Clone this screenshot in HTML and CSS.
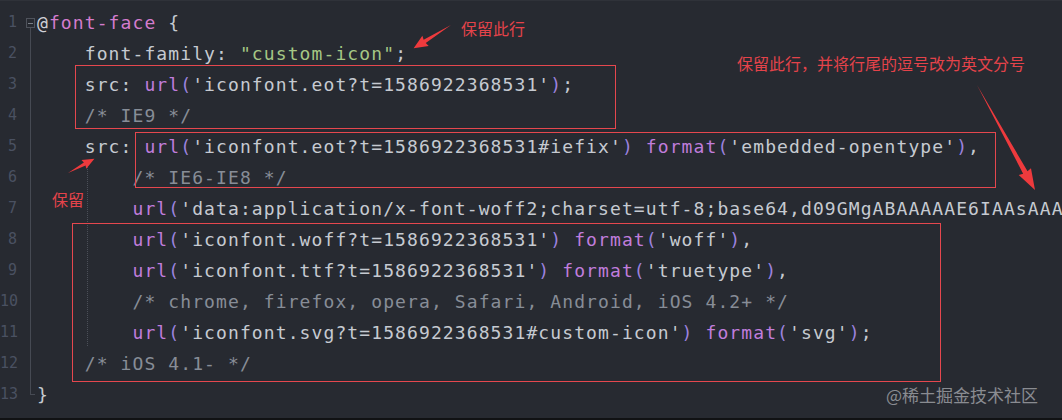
FILE: index.html
```html
<!DOCTYPE html>
<html>
<head>
    <title>@font-face</title>
    <link rel="stylesheet" href="styles.css">
</head>
<body>
    <div class="editor">
        <div class="line"><span class="num">1</span><span class="fold open"><i></i></span><span class="code"><span class="at">@</span><span class="kw">font-face</span> {</span></div>
        <div class="line"><span class="num">2</span><span class="fold mid"></span><span class="code">    font-family: <span class="str">"custom-icon"</span>;</span></div>
        <div class="line"><span class="num">3</span><span class="fold mid"></span><span class="code">    src: <span class="fn">url</span><span class="par">(</span>'iconfont.eot?t=1586922368531'<span class="par">)</span>;</span></div>
        <div class="line"><span class="num">4</span><span class="fold mid"></span><span class="code">    <span class="cm">/* IE9 */</span></span></div>
        <div class="line"><span class="num">5</span><span class="fold mid"></span><span class="code">    src: <span class="fn">url</span><span class="par">(</span>'iconfont.eot?t=1586922368531#iefix'<span class="par">)</span> <span class="fn">format</span><span class="par">(</span>'embedded-opentype'<span class="par">)</span>,</span></div>
        <div class="line"><span class="num">6</span><span class="fold mid"></span><span class="code">        <span class="cm">/* IE6-IE8 */</span></span></div>
        <div class="line"><span class="num">7</span><span class="fold mid"></span><span class="code">        <span class="fn">url</span><span class="par">(</span>'data:application/x-font-woff2;charset=utf-8;base64,d09GMgABAAAAAE6IAAsAAAAAkHAAAE46AAEAAAAAAAAAAAAAAAAAAAAAAAAAAAAAHEIGVgCWHAqCsFiB'</span></div>
        <div class="line"><span class="num">8</span><span class="fold mid"></span><span class="code">        <span class="fn">url</span><span class="par">(</span>'iconfont.woff?t=1586922368531'<span class="par">)</span> <span class="fn">format</span><span class="par">(</span>'woff'<span class="par">)</span>,</span></div>
        <div class="line"><span class="num">9</span><span class="fold mid"></span><span class="code">        <span class="fn">url</span><span class="par">(</span>'iconfont.ttf?t=1586922368531'<span class="par">)</span> <span class="fn">format</span><span class="par">(</span>'truetype'<span class="par">)</span>,</span></div>
        <div class="line"><span class="num">10</span><span class="fold mid"></span><span class="code">        <span class="cm">/* chrome, firefox, opera, Safari, Android, iOS 4.2+ */</span></span></div>
        <div class="line"><span class="num">11</span><span class="fold mid"></span><span class="code">        <span class="fn">url</span><span class="par">(</span>'iconfont.svg?t=1586922368531#custom-icon'<span class="par">)</span> <span class="fn">format</span><span class="par">(</span>'svg'<span class="par">)</span>;</span></div>
        <div class="line"><span class="num">12</span><span class="fold mid"></span><span class="code">    <span class="cm">/* iOS 4.1- */</span></span></div>
        <div class="line"><span class="num">13</span><span class="fold end"></span><span class="code">}</span></div>

        <div class="indent-guide"></div>

        <div class="box box-a"></div>
        <div class="box box-b"></div>
        <div class="box box-c"></div>

        <div class="note note-a">保留此行</div>
        <div class="note note-b">保留此行，并将行尾的逗号改为英文分号</div>
        <div class="note note-c">保留</div>

        <svg class="arrows" width="1062" height="420" viewBox="0 0 1062 420">
            <!-- tapered arrows, drawn along x then rotated -->
            <g transform="translate(451 24) rotate(148.1)">
                <polygon points="0,0 31,-2 30,-6 44,0 30,6 31,2" fill="#ee3a3d"/>
            </g>
            <g transform="translate(977 84) rotate(61.1)">
                <polygon points="0,0 100,-2.5 99,-7 120,0 99,7 100,2.5" fill="#ee3a3d"/>
            </g>
            <g transform="translate(68 172) rotate(-28.3)">
                <polygon points="0,0 19,-1.8 18,-5 30,0 18,5 19,1.8" fill="#ee3a3d"/>
            </g>
        </svg>

        <div class="watermark">@稀土掘金技术社区</div>
    </div>
</body>
</html>
```

FILE: styles.css
```css
html, body {
    margin: 0;
    padding: 0;
    background-color: #111214;
}

.editor {
    position: relative;
    width: 1062px;
    height: 418px;
    overflow: hidden;
    background-color: #272a31;
    border-top: 1px solid #2f3239;
    box-sizing: border-box;
    padding-top: 6px;
    font-family: "DejaVu Sans Mono", monospace;
    color: #c6cad1;
}

.line {
    display: flex;
    height: 31px;
    line-height: 31px;
}

.num {
    width: 17px;
    flex: none;
    text-align: right;
    font-size: 15px;
    color: #4a5161;
}

.fold {
    position: relative;
    width: 19px;
    flex: none;
}

.fold.mid::before,
.fold.end::before {
    content: "";
    position: absolute;
    left: 13px;
    top: 0;
    bottom: 0;
    border-left: 1px solid #464a53;
}

.fold.end::before {
    bottom: 15px;
}

.fold.end::after {
    content: "";
    position: absolute;
    left: 13px;
    top: 15px;
    width: 5px;
    border-top: 1px solid #464a53;
}

.fold.open i {
    position: absolute;
    left: 9px;
    top: 11px;
    width: 7px;
    height: 8px;
    border: 1px solid #4f535c;
}

.fold.open i::after {
    content: "";
    position: absolute;
    left: 1px;
    right: 1px;
    top: 4px;
    border-top: 1px solid #7a7f88;
}

.fold.open::after {
    content: "";
    position: absolute;
    left: 13px;
    top: 21px;
    bottom: 0;
    border-left: 1px solid #464a53;
}

.code {
    white-space: pre;
    font-size: 18px;
    letter-spacing: 1.1px;
    padding-left: 1px;
}

.at { color: #cfd0d6; }
.kw { color: #d47ccd; }
.str { color: #a5c785; }
.fn { color: #c07ddc; }
.par { color: #9c82de; }
.cm { color: #878d97; }

.indent-guide {
    position: absolute;
    left: 87px;
    top: 163px;
    height: 182px;
    border-left: 1px dotted #4b4f58;
}

.box {
    position: absolute;
    border: 1px solid #e5474e;
}

.box-a {
    left: 75px;
    top: 64px;
    width: 539px;
    height: 62px;
}

.box-b {
    left: 135px;
    top: 131px;
    width: 859px;
    height: 54px;
}

.box-c {
    left: 72px;
    top: 222px;
    width: 867px;
    height: 157px;
}

.note {
    position: absolute;
    font-family: "Noto Sans CJK SC", sans-serif;
    font-size: 16px;
    line-height: 20px;
    color: #e4434a;
    white-space: nowrap;
}

.note-a { left: 461px; top: 17px; }
.note-b { left: 737px; top: 52px; }
.note-c { left: 52px; top: 188px; }

.arrows {
    position: absolute;
    left: 0;
    top: 0;
}

.watermark {
    position: absolute;
    left: 886px;
    top: 383px;
    font-family: "Noto Sans CJK SC", sans-serif;
    font-size: 17px;
    line-height: 22px;
    color: #8a8c91;
    white-space: nowrap;
}
```
